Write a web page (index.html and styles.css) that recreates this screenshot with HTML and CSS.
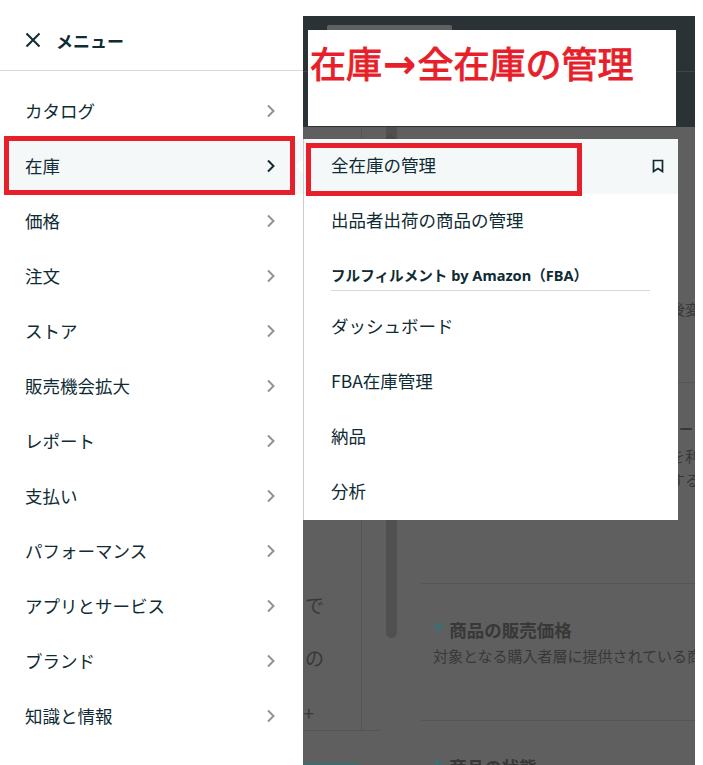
FILE: index.html
```html
<!DOCTYPE html>
<html lang="ja">
<head>
    <meta charset="UTF-8">
    <meta name="viewport" content="width=device-width, initial-scale=1.0">
    <title>メニュー - 全在庫の管理</title>
    <link rel="stylesheet" href="styles.css">
</head>
<body>

    <svg class="defs" width="0" height="0">
        <symbol id="chevron" viewBox="0 0 10 14">
            <path d="M2 1.5 L7.5 7 L2 12.5" fill="none" stroke="currentColor" stroke-width="2"/>
        </symbol>
    </svg>

    <div class="shot">

        <!-- Main menu -->
        <nav class="menu">
            <div class="menu-head">
                <svg class="close-icon" viewBox="0 0 16 16" width="16" height="16">
                    <path d="M1.5 1.5 L14.5 14.5 M14.5 1.5 L1.5 14.5" fill="none" stroke="currentColor" stroke-width="2"/>
                </svg>
                <span class="menu-title">メニュー</span>
            </div>
            <ul class="menu-list">
                <li class="menu-item"><span>カタログ</span><svg class="chevron"><use href="#chevron"/></svg></li>
                <li class="menu-item active"><span>在庫</span><svg class="chevron"><use href="#chevron"/></svg></li>
                <li class="menu-item"><span>価格</span><svg class="chevron"><use href="#chevron"/></svg></li>
                <li class="menu-item"><span>注文</span><svg class="chevron"><use href="#chevron"/></svg></li>
                <li class="menu-item"><span>ストア</span><svg class="chevron"><use href="#chevron"/></svg></li>
                <li class="menu-item"><span>販売機会拡大</span><svg class="chevron"><use href="#chevron"/></svg></li>
                <li class="menu-item"><span>レポート</span><svg class="chevron"><use href="#chevron"/></svg></li>
                <li class="menu-item"><span>支払い</span><svg class="chevron"><use href="#chevron"/></svg></li>
                <li class="menu-item"><span>パフォーマンス</span><svg class="chevron"><use href="#chevron"/></svg></li>
                <li class="menu-item"><span>アプリとサービス</span><svg class="chevron"><use href="#chevron"/></svg></li>
                <li class="menu-item"><span>ブランド</span><svg class="chevron"><use href="#chevron"/></svg></li>
                <li class="menu-item"><span>知識と情報</span><svg class="chevron"><use href="#chevron"/></svg></li>
            </ul>
        </nav>

        <!-- Dimmed page behind the menu -->
        <div class="stage">
            <div class="stage-head">
                <div class="head-tab"></div>
                <div class="head-line"></div>
            </div>
            <div class="stage-body">
                <div class="side">
                    <p class="side-text first">で</p>
                    <p class="side-text second">の</p>
                    <p class="side-text third">0+</p>
                </div>
                <div class="thumb"></div>
                <div class="form">
                    <div class="form-row row-a">
                        <p class="peek">後変</p>
                    </div>
                    <div class="form-row row-b">
                        <p class="peek peek-title">ー</p>
                        <p class="peek">を利</p>
                        <p class="peek">する</p>
                    </div>
                    <div class="form-row row-c">
                        <h4 class="field"><span class="star">*</span>商品の販売価格</h4>
                        <p class="field-note">対象となる購入者層に提供されている商品の価格</p>
                    </div>
                    <div class="form-row row-d">
                        <h4 class="field"><span class="star">*</span>商品の状態</h4>
                    </div>
                </div>
            </div>
            <div class="side-foot"></div>
            <div class="side-button"></div>
        </div>

        <!-- Submenu -->
        <div class="notch"></div>
        <div class="caret"></div>
        <div class="submenu">
            <div class="sub-item active">
                <span>全在庫の管理</span>
                <svg class="bookmark" viewBox="0 0 12 14" width="12" height="14">
                    <path d="M1.5 1.5 H10.5 V12.5 L6 9.5 L1.5 12.5 Z" fill="none" stroke="currentColor" stroke-width="1.7"/>
                </svg>
            </div>
            <div class="sub-item">出品者出荷の商品の管理</div>
            <div class="sub-title">フルフィルメント by Amazon（FBA）</div>
            <div class="sub-item">ダッシュボード</div>
            <div class="sub-item">FBA在庫管理</div>
            <div class="sub-item">納品</div>
            <div class="sub-item">分析</div>
        </div>

        <!-- Red annotations -->
        <div class="note">在庫<span class="note-arrow">→</span>全在庫の管理</div>
        <div class="red-box box-menu"></div>
        <div class="red-box box-sub"></div>
    </div>

</body>
</html>
```

FILE: styles.css
```css
* { box-sizing: border-box; }
body {
    margin: 0;
    background: #fff;
    color: #0f2b33;
    font-family: "Noto Sans CJK JP", "Noto Sans", sans-serif;
}
.defs { position: absolute; }
.shot {
    position: relative;
    display: flex;
    width: 703px;
    height: 765px;
    overflow: hidden;
}

/* main menu */
.menu { width: 303px; flex: none; }
.menu-head {
    display: flex;
    align-items: center;
    gap: 15px;
    height: 71px;
    padding: 10px 0 0 25px;
    border-bottom: 1px solid #d5d9d9;
}
.close-icon { flex: none; }
.menu-title { font-size: 17px; font-weight: 700; }
.menu-list { list-style: none; margin: 0; padding: 13px 0 0; }
.menu-item {
    display: flex;
    align-items: center;
    justify-content: space-between;
    height: 55px;
    padding: 0 27px 2px 25px;
    font-size: 17.5px;
    color: #8c9496;
}
.menu-item span { color: #0f2b33; }
.menu-item.active { background: #f5f8f9; color: #0f2b33; }
.chevron { width: 10px; height: 14px; }

/* dimmed page */
.stage {
    position: relative;
    width: 392px;
    height: 749px;
    margin-top: 16px;
    background: #5f5f5f;
    color: #383838;
    overflow: hidden;
}
.stage-head { position: relative; height: 111px; background: #2b3235; padding: 9px 0 0 24px; }
.head-tab { width: 125px; height: 6px; background: #5c6164; border-radius: 2px 2px 0 0; }
.head-line { margin: 40px 0 0 -24px; height: 1px; background: #3f4649; }
.stage-body { display: flex; height: 638px; }
.side { width: 59px; flex: none; height: 603px; border-right: 1px solid #555; padding-top: 465px; overflow: hidden; }
.side-text { margin: 0; font-size: 19px; line-height: 26px; white-space: nowrap; }
.side-text.first { padding-left: 2px; }
.side-text.second { margin-top: 27px; padding-left: 2px; }
.side-text.third { margin-top: 29px; margin-left: -10px; font-size: 19px; }
.thumb { width: 11px; height: 511px; margin-left: 24px; flex: none; background: #505050; border-radius: 0 0 6px 6px; }
.form { width: 276px; margin-left: 24px; flex: none; white-space: nowrap; }
.form-row { border-bottom: 1px solid #555; overflow: hidden; }
.row-a { height: 256px; padding-top: 170px; }
.row-b { height: 201px; padding-top: 33px; }
.row-c { height: 137px; padding: 33px 0 0 12px; }
.row-d { padding: 33px 0 0 12px; border-bottom: 0; }
.peek { margin: 0 0 0 249px; font-size: 15px; line-height: 24px; }
.peek-title { height: 28px; margin-left: 258px; font-weight: 700; font-size: 14px; }
.field { margin: 0; font-size: 17.5px; font-weight: 700; line-height: 26px; }
.star { margin-right: 6px; color: #3a7072; font-family: "Noto Sans", sans-serif; font-size: 19px; }
.field-note { margin: 0; font-size: 15px; line-height: 25px; }
.side-foot { position: absolute; left: 0; top: 714px; width: 77px; height: 1px; background: #555; }
.side-button { position: absolute; left: 0; bottom: 0; width: 56px; height: 2px; background: #3f6c70; }

/* submenu */
.submenu {
    position: absolute;
    left: 303px;
    top: 139px;
    width: 375px;
    height: 381px;
    background: #fff;
    border-left: 1px solid #ccc;
    color: #0f2b33;
}
.sub-item {
    display: flex;
    align-items: center;
    justify-content: space-between;
    height: 55px;
    padding: 0 14px 5px 27px;
    font-size: 17.5px;
}
.sub-item.active { background: #f5f8f9; }
.bookmark { margin-top: 3px; }
.sub-title {
    margin: 0 28px 9px 27px;
    height: 42px;
    padding-top: 15px;
    border-bottom: 1px solid #d5d9d9;
    font-family: "Noto Sans", "Noto Sans CJK JP", sans-serif;
    font-size: 14.6px;
    line-height: 22px;
    font-weight: 700;
}
.notch {
    position: absolute;
    left: 298px;
    top: 160px;
    width: 12px;
    height: 12px;
    background: #fff;
    transform: rotate(45deg);
}
.caret {
    position: absolute;
    left: 385px;
    top: 133px;
    border: 6px solid transparent;
    border-top: 0;
    border-bottom-color: #4a4a4a;
}

/* red annotations */
.note {
    position: absolute;
    left: 308px;
    top: 30px;
    width: 368px;
    height: 96px;
    padding: 3px 0 0 2px;
    background: #fff;
    color: #e71f2a;
    font-size: 36px;
    font-weight: 400;
    -webkit-text-stroke: 1px #e71f2a;
    line-height: 58px;
    white-space: nowrap;
}
.note-arrow { font-family: "DejaVu Sans", sans-serif; font-weight: 700; font-size: 40px; line-height: 40px; margin: 0 1px; -webkit-text-stroke: 0; }
.red-box { position: absolute; border: 5px solid #e71f2a; }
.box-menu { left: 4px; top: 136px; width: 291px; height: 59px; }
.box-sub { left: 306px; top: 143px; width: 276px; height: 53px; }
```
